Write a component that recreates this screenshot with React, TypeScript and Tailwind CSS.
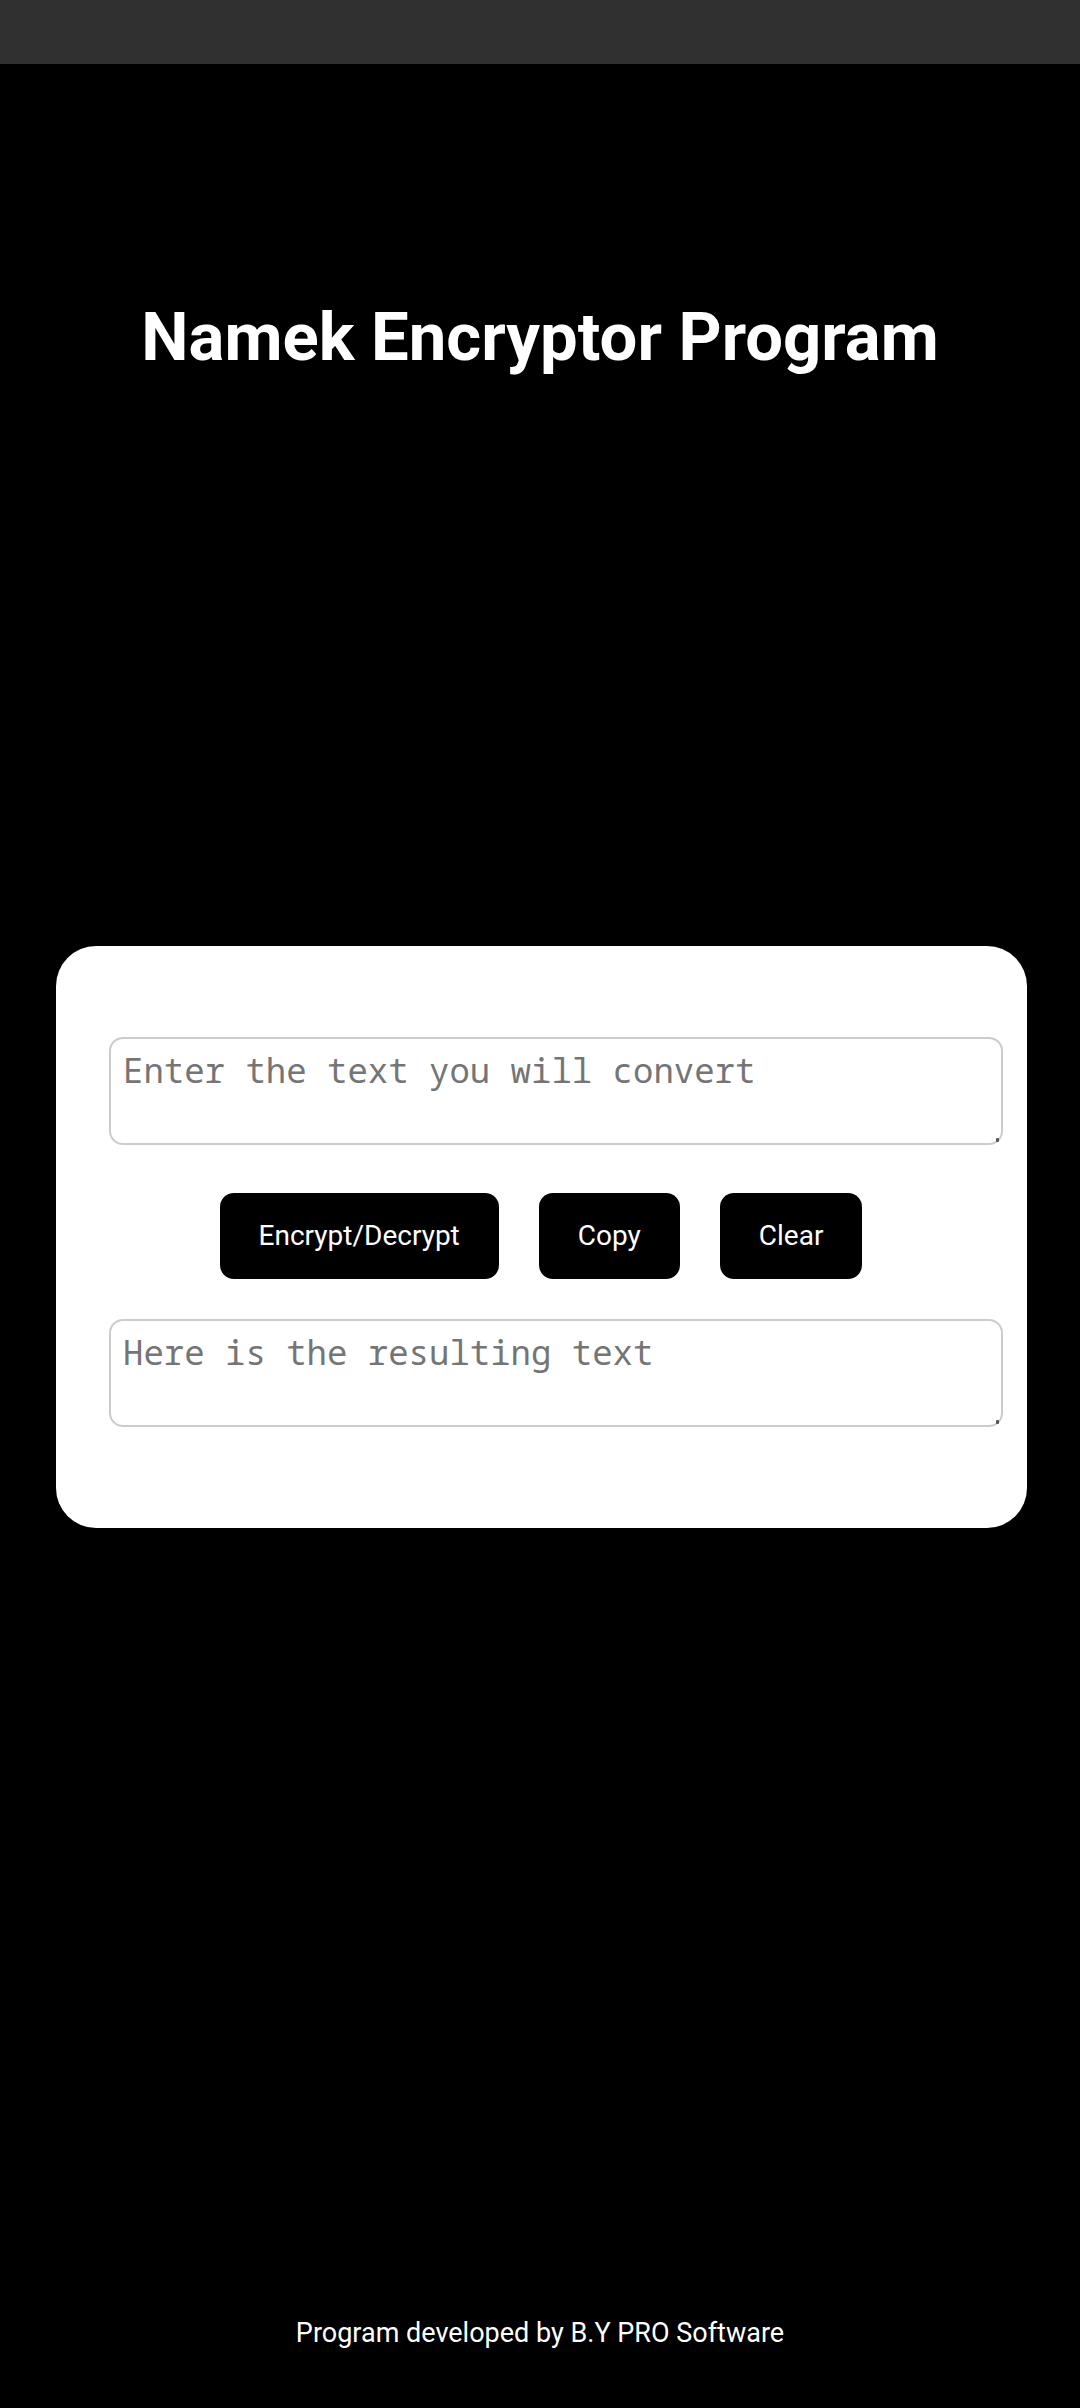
import React, { useState } from "react";

const field =
  "block h-[108px] w-full resize-none overflow-hidden rounded-[14px] border-2 border-[#cccccc] bg-white px-3 py-2 font-['Noto_Sans_Mono','DejaVu_Sans_Mono',monospace] text-[34px] leading-[46px] text-black placeholder:text-[#757575] outline-none";
const button =
  "h-[86px] rounded-[14px] bg-black px-[39px] text-[28px] leading-8 text-white";

function Field({ label, value, onChange }: { label: string; value: string; onChange: (v: string) => void }) {
  return (
    <div className="relative">
      <textarea aria-label={label} placeholder={label} value={value} onChange={(e) => onChange(e.target.value)} className={field} />
      <span className="absolute right-1 bottom-[3px] h-1 w-[3px] rounded-[1px] bg-[#555555]" />
    </div>
  );
}

export default function App() {
  const [input, setInput] = useState("");
  const [output, setOutput] = useState("");
  return (
    <div className="flex min-h-screen flex-col bg-black font-[Roboto,sans-serif] text-white">
      <div className="h-16 bg-[#303030]" />
      <header className="mt-[233px] text-center">
        <h1 className="text-[67px] leading-[80px] font-bold">Namek Encryptor Program</h1>
      </header>
      <main className="mt-[569px] mr-[53px] ml-14 rounded-[40px] bg-white pt-[91px] pr-6 pb-[101px] pl-[53px]">
        <Field label="Enter the text you will convert" value={input} onChange={setInput} />
        <div className="mt-12 mb-10 flex justify-center gap-10 pr-[30px]">
          <button className={button} onClick={() => setOutput(input)}>Encrypt/Decrypt</button>
          <button className={button} onClick={() => navigator.clipboard?.writeText(output)}>Copy</button>
          <button className={button} onClick={() => { setInput(""); setOutput(""); }}>Clear</button>
        </div>
        <Field label="Here is the resulting text" value={output} onChange={setOutput} />
      </main>
      <footer className="mt-auto pb-[59px] text-center text-[27px] leading-8">Program developed by B.Y PRO Software</footer>
    </div>
  );
}
